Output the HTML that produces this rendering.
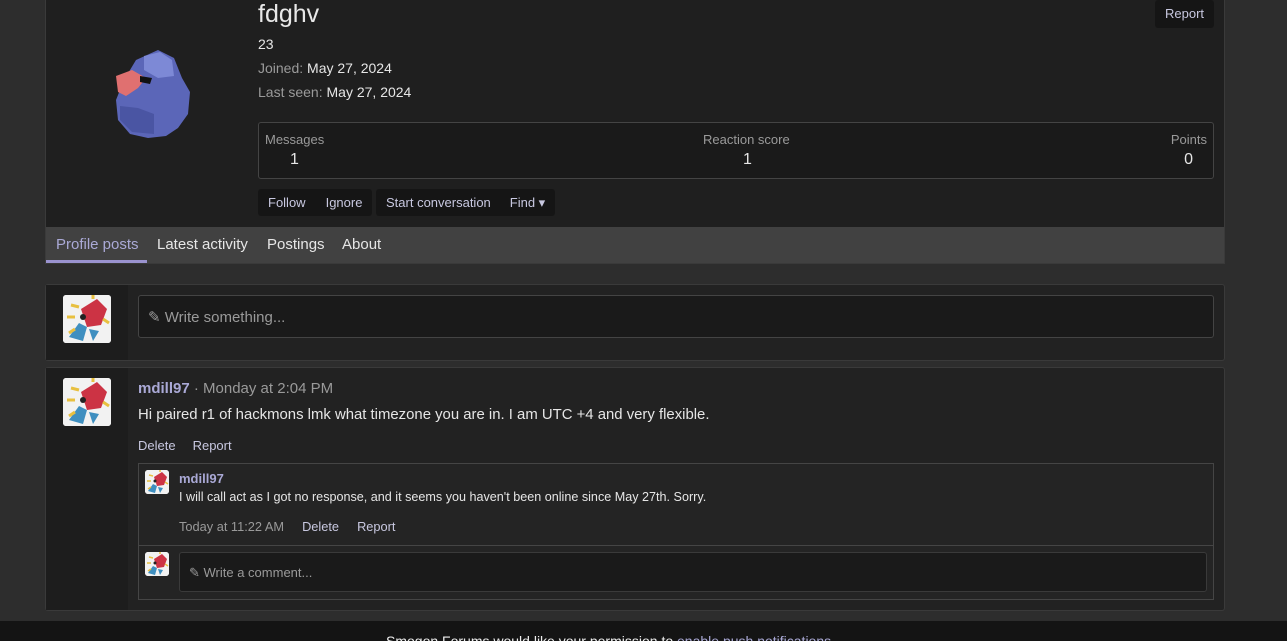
<!DOCTYPE html>
<html><head><meta charset="utf-8"><style>
*{box-sizing:border-box;margin:0;padding:0}
html,body{width:1287px;height:641px;overflow:hidden}
body{background:#2d2d2d;font-family:"Liberation Sans",sans-serif;color:#e6e6e6;position:relative}
.abs{position:absolute}
.muted{color:#9a9a9a}
.link{color:#aaa9d6}
.btn{background:#151515;border-radius:3px;color:#c8c8e0;font-size:13px}
.av{position:absolute;background:#f2f2f2;border-radius:3px;overflow:hidden}
</style></head><body>
<div class="abs" style="left:45px;top:0;width:1180px;height:227px;background:#1f1f1f;border-left:1px solid #3a3a3a;border-right:1px solid #3a3a3a"></div>
<svg class="abs" style="left:108px;top:48px" width="86" height="92" viewBox="0 0 86 92">
<path d="M28 12 L50 2 L66 10 L74 30 L82 44 L80 66 L70 80 L58 88 L40 90 L22 86 L10 72 L8 52 L16 32 Z" fill="#5b66b8"/>
<path d="M36 8 L52 4 L64 12 L66 28 L50 30 L36 22 Z" fill="#7d89d6"/>
<path d="M12 58 L30 60 L46 66 L46 86 L24 84 L12 72 Z" fill="#4a55a3"/>
<path d="M8 28 L24 22 L38 30 L30 40 L18 48 L10 44 Z" fill="#e07070"/>
<path d="M32 28 L44 30 L42 36 L32 34 Z" fill="#111"/>
</svg>
<div class="abs" style="left:258px;top:0;font-size:25px;color:#e8e8e8">fdghv</div>
<div class="abs" style="left:258px;top:36px;font-size:14px">23</div>
<div class="abs" style="left:258px;top:60px;font-size:14px"><span class="muted">Joined:</span> May 27, 2024</div>
<div class="abs" style="left:258px;top:84px;font-size:14px"><span class="muted">Last seen:</span> May 27, 2024</div>
<div class="abs btn" style="left:1155px;top:0;width:59px;height:28px;line-height:28px;text-align:center">Report</div>
<div class="abs" style="left:258px;top:122px;width:956px;height:57px;background:#1a1a1a;border:1px solid #444;border-radius:3px">
 <div class="abs muted" style="left:6px;top:9px;font-size:13px">Messages</div>
 <div class="abs" style="left:31px;top:28px;font-size:16px">1</div>
 <div class="abs muted" style="left:444px;top:9px;font-size:13px">Reaction score</div>
 <div class="abs" style="left:484px;top:28px;font-size:16px">1</div>
 <div class="abs muted" style="right:6px;top:9px;font-size:13px">Points</div>
 <div class="abs" style="right:20px;top:28px;font-size:16px">0</div>
</div>
<div class="abs btn" style="left:258px;top:189px;width:114px;height:27px;line-height:27px"><span style="margin-left:10px">Follow</span><span style="margin-left:20px">Ignore</span></div>
<div class="abs btn" style="left:376px;top:189px;width:179px;height:27px;line-height:27px"><span style="margin-left:10px">Start conversation</span><span style="margin-left:19px">Find ▾</span></div>
<div class="abs" style="left:45px;top:227px;width:1180px;height:37px;background:#414141;border:1px solid #3a3a3a;border-top:none"></div>
<div class="abs" style="left:46px;top:260px;width:101px;height:3px;background:#9a93cf"></div>
<div class="abs" style="left:56px;top:236px;font-size:15px;color:#aaa9d6">Profile posts</div>
<div class="abs" style="left:157px;top:236px;font-size:15px">Latest activity</div>
<div class="abs" style="left:267px;top:236px;font-size:15px">Postings</div>
<div class="abs" style="left:342px;top:236px;font-size:15px">About</div>
<div class="abs" style="left:45px;top:284px;width:1180px;height:77px;background:#222;border:1px solid #3a3a3a;border-radius:3px"></div>
<div class="abs" style="left:46px;top:285px;width:82px;height:75px;background:#1d1d1d"></div>
<div class="abs" style="left:138px;top:295px;width:1076px;height:43px;background:#1a1a1a;border:1px solid #444;border-radius:3px"></div>
<div class="abs muted" style="left:148px;top:308px;font-size:15px">✎ Write something...</div>
<div class="abs" style="left:45px;top:367px;width:1180px;height:244px;background:#222;border:1px solid #3a3a3a;border-radius:3px"></div>
<div class="abs" style="left:46px;top:368px;width:82px;height:242px;background:#1d1d1d"></div>
<div class="abs" style="left:138px;top:380px;font-size:15px"><b class="link">mdill97</b> <span class="muted">· Monday at 2:04 PM</span></div>
<div class="abs" style="left:138px;top:407px;font-size:14.9px">Hi paired r1 of hackmons lmk what timezone you are in. I am UTC +4 and very flexible.</div>
<div class="abs" style="left:138px;top:438px;font-size:13px;color:#c8c8e0">Delete<span style="margin-left:17px">Report</span></div>
<div class="abs" style="left:138px;top:463px;width:1076px;height:137px;background:#242424;border:1px solid #454545"></div>
<div class="abs" style="left:139px;top:545px;width:1074px;height:1px;background:#454545"></div>
<div class="abs" style="left:179px;top:471px;font-size:13px"><b class="link">mdill97</b></div>
<div class="abs" style="left:179px;top:490px;font-size:12.6px">I will call act as I got no response, and it seems you haven't been online since May 27th. Sorry.</div>
<div class="abs" style="left:179px;top:519px;font-size:12.8px"><span class="muted">Today at 11:22 AM</span><span style="margin-left:18px;color:#c8c8e0">Delete</span><span style="margin-left:18px;color:#c8c8e0">Report</span></div>
<div class="abs" style="left:179px;top:552px;width:1028px;height:40px;background:#1a1a1a;border:1px solid #3a3a3a;border-radius:3px"></div>
<div class="abs muted" style="left:189px;top:565px;font-size:13px">✎ Write a comment...</div>
<svg width="0" height="0" style="position:absolute"><defs><symbol id="pz" viewBox="0 0 48 48">
<rect width="48" height="48" fill="#f2f2f2"/>
<path d="M18 14 L34 4 L44 14 L38 30 L24 32 Z" fill="#cc3344"/>
<path d="M6 42 L16 28 L24 32 L20 46 Z" fill="#3f8fc0"/>
<path d="M26 34 L36 36 L30 46 Z" fill="#3f8fc0"/>
<circle cx="20" cy="22" r="3" fill="#222"/>
<path d="M8 10 L16 12 M4 22 L12 22 M30 4 L30 0 M40 24 L46 28 M12 34 L6 38" stroke="#e8c040" stroke-width="3"/>
</symbol></defs></svg>
<svg class="av" style="left:63px;top:295px" width="48" height="48"><use href="#pz"/></svg>
<svg class="av" style="left:63px;top:378px" width="48" height="48"><use href="#pz"/></svg>
<svg class="av" style="left:145px;top:470px" width="24" height="24"><use href="#pz"/></svg>
<svg class="av" style="left:145px;top:552px" width="24" height="24"><use href="#pz"/></svg>
<div class="abs" style="left:0;top:621px;width:1287px;height:20px;background:#141414;overflow:hidden">
<div class="abs" style="left:386px;top:12px;font-size:14px;color:#eee;white-space:nowrap">Smogon Forums would like your permission to <span class="link">enable push notifications</span>.</div>
</div>
</body></html>
